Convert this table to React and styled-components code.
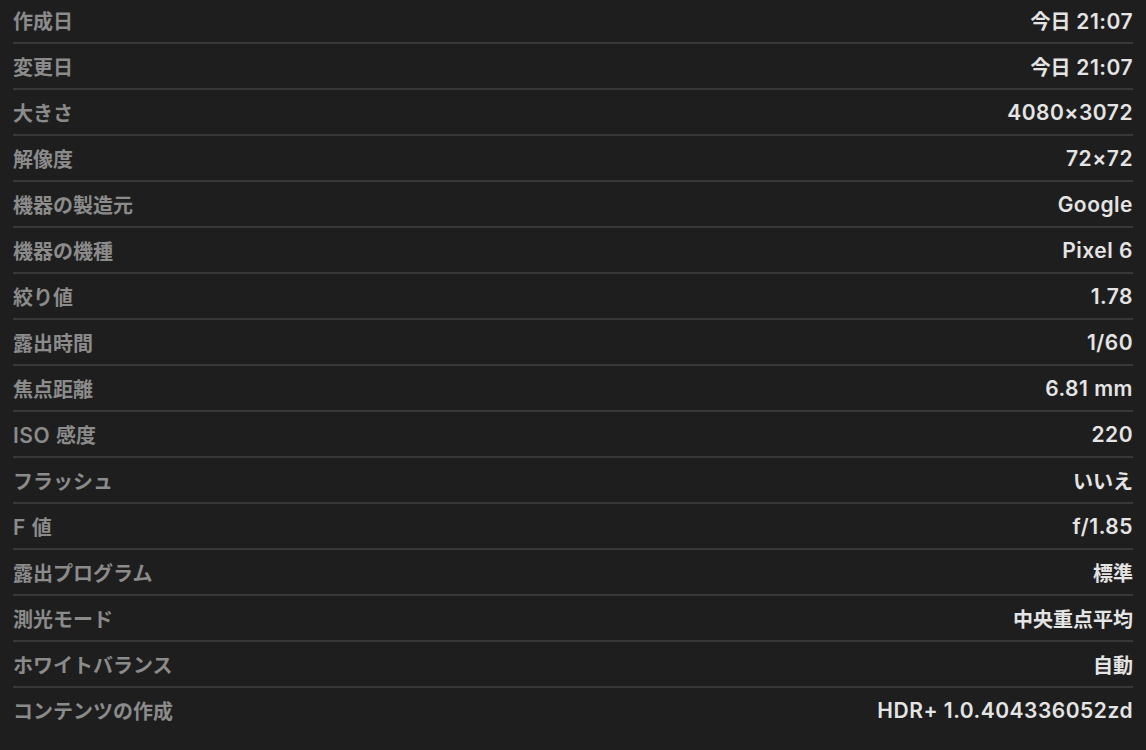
import React from "react";
import styled, { createGlobalStyle } from "styled-components";

const GlobalStyle = createGlobalStyle`
  html, body {
    margin: 0;
    padding: 0;
    background: #1e1e1e;
  }
  body {
    font-family: Inter, "Noto Sans CJK JP", sans-serif;
    -webkit-font-smoothing: antialiased;
  }
`;

const rows = [
  ["作成日", "今日 21:07"],
  ["変更日", "今日 21:07"],
  ["大きさ", "4080×3072"],
  ["解像度", "72×72"],
  ["機器の製造元", "Google"],
  ["機器の機種", "Pixel 6"],
  ["絞り値", "1.78"],
  ["露出時間", "1/60"],
  ["焦点距離", "6.81 mm"],
  ["ISO 感度", "220"],
  ["フラッシュ", "いいえ"],
  ["F 値", "f/1.85"],
  ["露出プログラム", "標準"],
  ["測光モード", "中央重点平均"],
  ["ホワイトバランス", "自動"],
  ["コンテンツの作成", "HDR+ 1.0.404336052zd"],
];

// split text into CJK / latin runs so each script gets its own size
const CJK = /[\u3000-\u9fff\uff00-\uffef]+|[^\u3000-\u9fff\uff00-\uffef]+/g;
const isCjk = (s) => /[\u3000-\u9fff\uff00-\uffef]/.test(s);

const Panel = styled.div`
  width: 1146px;
  height: 750px;
  box-sizing: border-box;
  padding: 0 13px;
  overflow: hidden;
  background: #1e1e1e;
`;

const List = styled.dl`
  margin: -2px 0 0;
  display: flex;
  flex-direction: column;
`;

const Row = styled.div`
  display: flex;
  align-items: center;
  justify-content: space-between;
  height: 44px;
  border-bottom: 2px solid ${(p) => (p.$last ? "transparent" : "#383838")};
`;

const Label = styled.dt`
  margin: 0;
  color: #8b8b8b;
  white-space: pre;
`;

const Value = styled.dd`
  margin: 0;
  color: #e4e4e4;
  white-space: pre;
`;

const Run = styled.span`
  font-size: ${(p) => (p.$cjk ? "20px" : "21px")};
  font-weight: ${(p) => (p.$cjk ? 700 : 600)};
  letter-spacing: ${(p) => (p.$cjk ? "0" : "0.5px")};
`;

const Text = ({ children }) =>
  children.match(CJK).map((part, i) => (
    <Run key={i} $cjk={isCjk(part)}>
      {part}
    </Run>
  ));

export default function App() {
  return (
    <>
      <GlobalStyle />
      <Panel>
        <List>
          {rows.map(([label, value], i) => (
            <Row key={label} $last={i === rows.length - 1}>
              <Label>
                <Text>{label}</Text>
              </Label>
              <Value>
                <Text>{value}</Text>
              </Value>
            </Row>
          ))}
        </List>
      </Panel>
    </>
  );
}
